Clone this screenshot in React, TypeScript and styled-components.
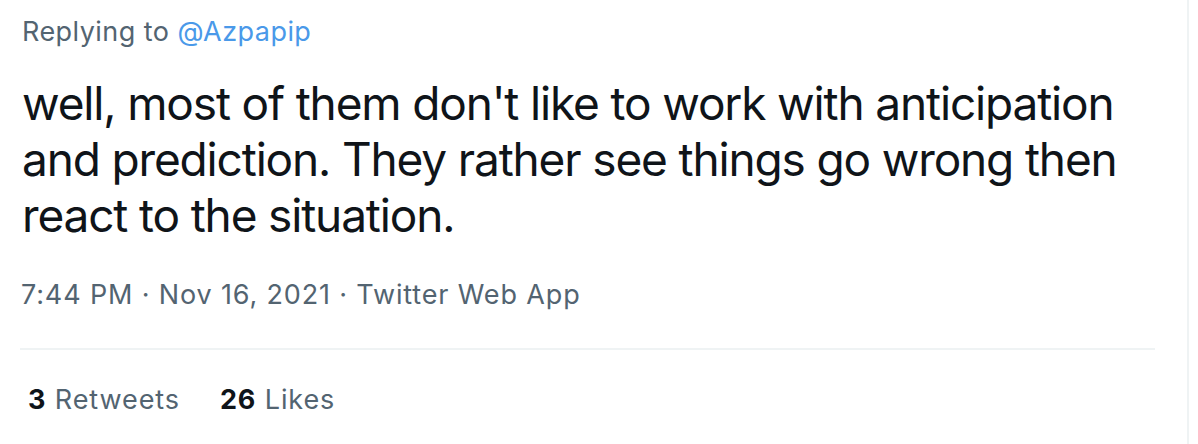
import styled, { createGlobalStyle } from "styled-components";

const GlobalStyle = createGlobalStyle`
  html, body {
    margin: 0;
    padding: 0;
    background: #ffffff;
  }
  body {
    font-family: Inter, "Noto Sans", "Liberation Sans", sans-serif;
    -webkit-font-smoothing: antialiased;
  }
`;

function App() {
  return (
    <>
      <GlobalStyle />
      <Column>
        <Tweet>
          <ReplyLine>
            Replying to <Mention>@Azpapip</Mention>
          </ReplyLine>
          <Body>
            well, most of them don't like to work with anticipation and
            prediction. They rather see things go wrong then react to the
            situation.
          </Body>
          <Meta>7:44 PM · Nov 16, 2021 · Twitter Web App</Meta>
          <Divider />
          <Stats>
            <Stat>
              <Count>3</Count> Retweets
            </Stat>
            <Stat>
              <Count>26</Count> Likes
            </Stat>
          </Stats>
        </Tweet>
      </Column>
    </>
  );
}

export default App;

const Column = styled.main`
  width: 1189px;
  height: 444px;
  box-sizing: border-box;
  border-right: 2px solid #eff3f4;
`;

const Tweet = styled.article`
  width: 1135px;
  padding: 16px 0 0 20px;
`;

const ReplyLine = styled.div`
  font-size: 27px;
  line-height: 32px;
  letter-spacing: 0.45px;
  color: #536471;
  padding-left: 2px;
`;

const Mention = styled.span`
  color: #4a99e9;
`;

const Body = styled.p`
  margin: 27px 0 0;
  padding-left: 2px;
  font-size: 46px;
  line-height: 56px;
  letter-spacing: -1.15px;
  color: #0f1419;
`;

const Meta = styled.div`
  margin-top: 35px;
  padding-left: 1px;
  font-size: 27px;
  line-height: 34px;
  letter-spacing: 0.85px;
  color: #536471;
`;

const Divider = styled.hr`
  margin: 36px 0 0;
  border: 0;
  height: 2px;
  background: #eff3f4;
`;

const Stats = styled.div`
  display: flex;
  gap: 40px;
  margin-top: 34px;
  padding-left: 8px;
  font-size: 27px;
  line-height: 32px;
  letter-spacing: 0.9px;
  color: #536471;
`;

const Stat = styled.span``;

const Count = styled.b`
  font-weight: 700;
  color: #0f1419;
`;
